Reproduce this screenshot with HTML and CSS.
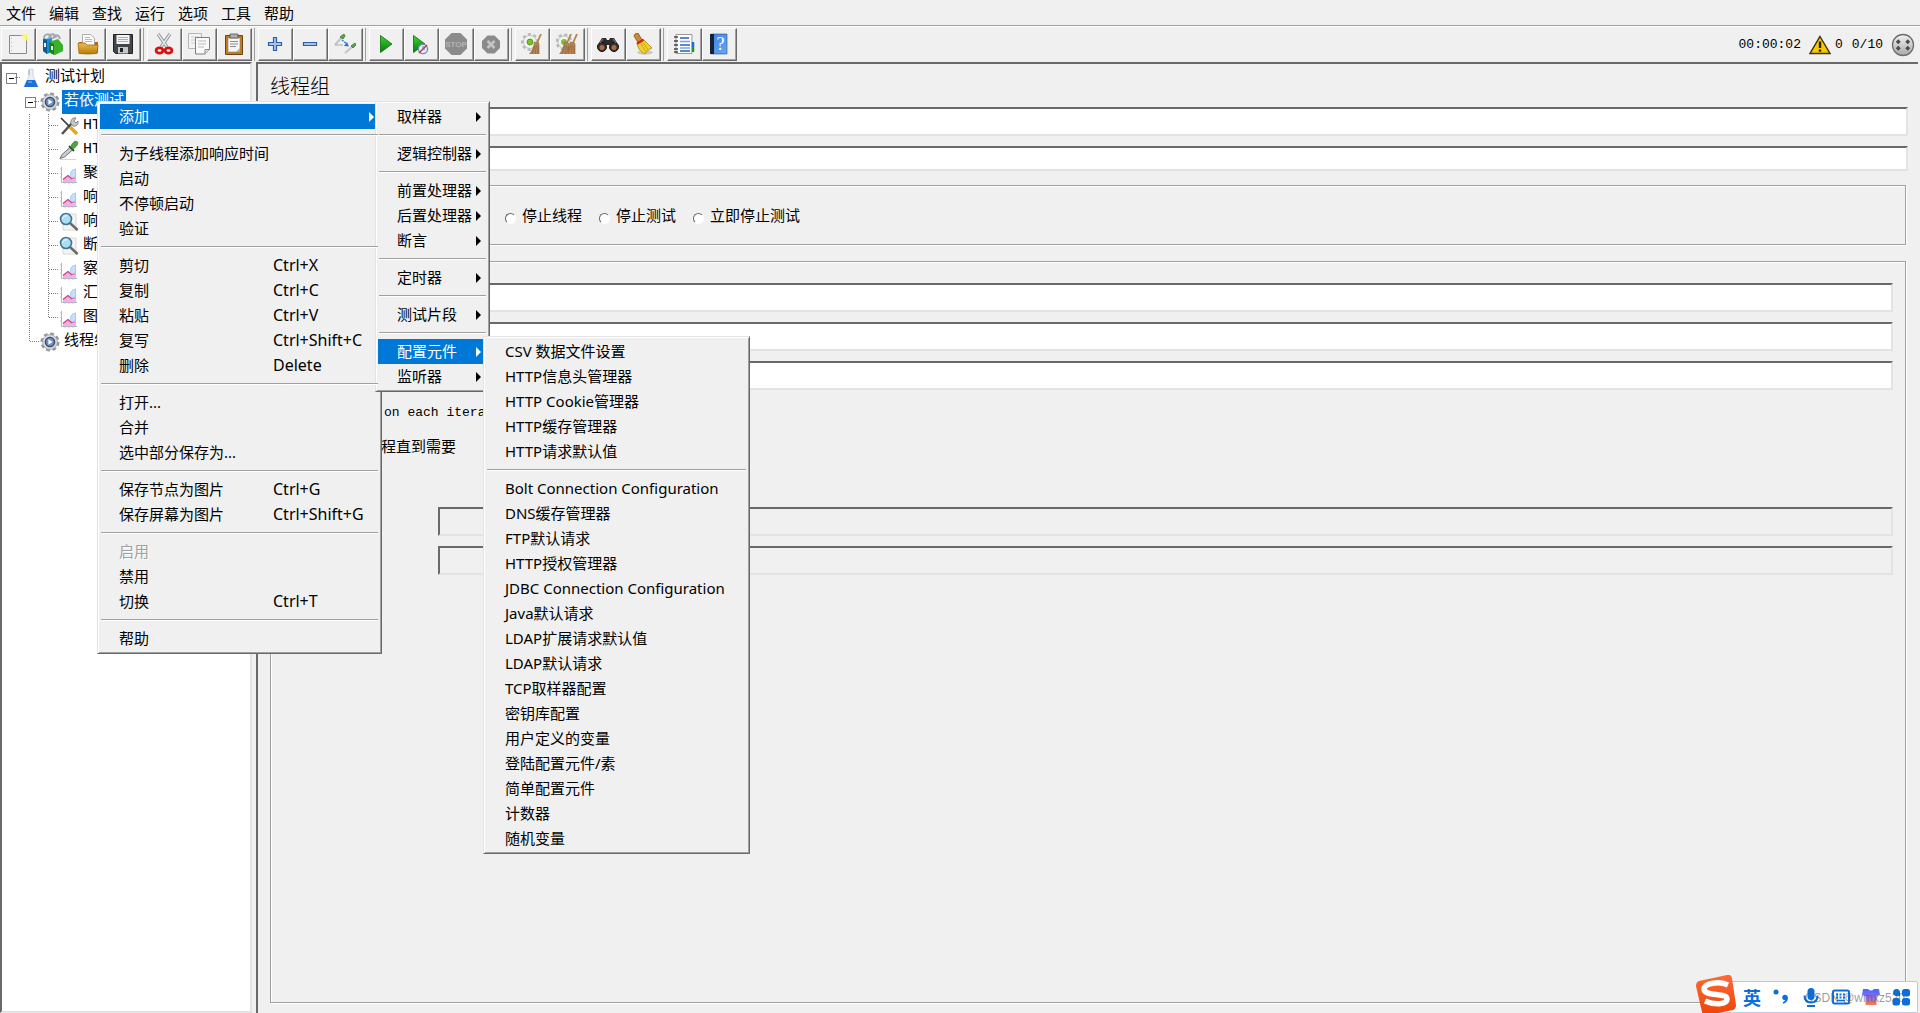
FILE: index.html
```html
<!DOCTYPE html>
<html lang="zh-CN">
<head>
<meta charset="utf-8">
<title>线程组</title>
<link rel="stylesheet" href="styles.css">
</head>
<body>
<svg class="defs" aria-hidden="true">
  <defs>
    <linearGradient id="play" x1="0" y1="0" x2="0" y2="1"><stop offset="0" stop-color="#3fd43a"/><stop offset="1" stop-color="#067a06"/></linearGradient>
    <linearGradient id="gold" x1="0" y1="0" x2="0" y2="1"><stop offset="0" stop-color="#f0bd4a"/><stop offset="1" stop-color="#b87a08"/></linearGradient>
    <linearGradient id="book" x1="0" y1="0" x2="1" y2="1"><stop offset="0" stop-color="#3b83e0"/><stop offset="1" stop-color="#6aa6f2"/></linearGradient>
    <linearGradient id="steel" x1="0" y1="0" x2="0" y2="1"><stop offset="0" stop-color="#f2f2f2"/><stop offset="1" stop-color="#a5a9ad"/></linearGradient>
    <linearGradient id="sogou" x1="0" y1="0" x2="0" y2="1"><stop offset="0" stop-color="#fb6a3a"/><stop offset="1" stop-color="#f04405"/></linearGradient>
    <linearGradient id="shirt" x1="0" y1="0" x2="0" y2="1"><stop offset="0" stop-color="#3f6cff"/><stop offset=".5" stop-color="#8a6cf0"/><stop offset="1" stop-color="#ff7a3c"/></linearGradient>
    <symbol id="gear" viewBox="0 0 20 20">
      <circle cx="10" cy="10" r="8" fill="none" stroke="#909498" stroke-width="3" stroke-dasharray="3.6 2.68"/>
      <circle cx="10" cy="10" r="7.4" fill="#d9dbdd" stroke="#9b9fa3" stroke-width=".8"/>
      <circle cx="10" cy="10" r="4.6" fill="#6f8fc4" stroke="#3a4a66" stroke-width="1.4"/>
      <path d="M8.4 7.3 12.6 10l-4.2 2.7z" fill="#fff"/>
    </symbol>
    <symbol id="chart" viewBox="0 0 20 20">
      <path d="M2.500 3v15.500H18" fill="none" stroke="#b4b4be"/>
      <path d="M1 5h2M1 9h2M1 13h2M6 18v2M10 18v2M14 18v2" stroke="#c4c4cc"/>
      <path d="M4 18v-2l5-4 4 3 4-1v4z" fill="#f5aee6"/>
      <path d="M4 15.500l5-4 3.500 3 4-1" fill="none" stroke="#cc3a78" stroke-width="1.200"/>
      <path d="M16.500 5c-6 1-6 7-3 9l3-1z" fill="#c6dffb" stroke="#94bff2" stroke-width=".8"/>
    </symbol>
    <symbol id="lens" viewBox="0 0 20 20">
      <path d="M4 2h13v16H4z" fill="#f4f4f4" stroke="#d8d8d8"/>
      <path d="M11 11l7 6.500" stroke="#6a6a6a" stroke-width="2.400" stroke-linecap="round"/>
      <circle cx="7" cy="7" r="5.500" fill="#a8def6" stroke="#4a7390" stroke-width="1.600"/>
      <path d="M4 6.500c.5-2 2-3 4-2.800" stroke="#fff" fill="none"/>
    </symbol>
    <symbol id="dropper" viewBox="0 0 20 20">
      <path d="M1 19.500h16" stroke="#d5d5d5"/>
      <path d="M1 18.500l2-4 8.500-7.500 2.500 2.500L5.500 17z" fill="#c9cdd0" stroke="#5f6468" stroke-width=".9"/>
      <path d="M10 6l5 5" stroke="#2e5a2c" stroke-width="2"/>
      <path d="M12 6.500c1-4 4-6 6-5s0 5-3.500 7z" fill="#4fa342" stroke="#2f7428" stroke-width=".7"/>
    </symbol>
    <symbol id="broom" viewBox="0 0 20 20">
      <path d="M16 0 12 9" stroke="#b5834c" stroke-width="1.800"/>
      <path d="M9.500 8l4.500 1.500v11H4C7.500 17 9 12 9.500 8z" fill="#b78855" stroke="#866038" stroke-width=".6"/>
      <path d="M10 11l-3 9M11.500 11l-1.500 9M13 12v8" stroke="#7d5630" stroke-width=".5"/>
    </symbol>
  </defs>
</svg>

<nav class="menubar" aria-label="主菜单">
  <button>文件</button><button>编辑</button><button>查找</button><button>运行</button><button>选项</button><button>工具</button><button>帮助</button>
</nav>

<div class="toolbar" role="toolbar">
  <div class="group">
    <button aria-label="新建"><svg viewBox="0 0 22 22"><path d="M2.500 2.500h17v18h-17z" fill="#f3f3f3" stroke="#8a8a8a"/><path d="M4.500 5v13" stroke="#b8b8b8" stroke-dasharray="1 3"/><circle cx="18" cy="4" r="4" fill="#fbf3a0" opacity=".7"/><circle cx="18" cy="4" r="2" fill="#fff86a"/></svg></button>
    <button aria-label="模板"><svg viewBox="0 0 22 22"><path d="M2 6c0-6 6-6 7-1M7 5c1-5 6-5 7 0M11 6c1-5 6-5 7 0" fill="none" stroke="#a3a9ae" stroke-width="2"/><path d="M1 6l9-1v14l-5 2-4-3z" fill="#1c8fd0"/><path d="M1 6l4 1v14l-4-3z" fill="#0d5c94"/><path d="M7 9l9-3 5 6v6l-8 4-6-3z" fill="#3bb02d"/><path d="M7 9l5 2v11l-5-3z" fill="#1f8014"/><path d="M2 10h2v4H2zM9 13h2v4H9z" fill="#e8f4ff"/></svg></button>
    <button aria-label="打开"><svg viewBox="0 0 22 22"><path d="M2 9h19v11H2z" fill="#a8710c"/><path d="M5.500 1.500h8l4 3.500v9h-12z" fill="#fafafa" stroke="#9a9a9a" stroke-width=".8"/><path d="M8 4.500h5M8 6.500h7M8 8.500h7" stroke="#b9b9b9"/><path d="M1 10h7l2 2h11l-1 8.500q-9 1-18 0z" fill="url(#gold)" stroke="#a06a06" stroke-width=".8"/></svg></button>
    <button aria-label="保存"><svg viewBox="0 0 22 22"><path d="M1.500 1.500h19v19h-17l-2-2z" fill="#42464b" stroke="#222"/><path d="M4.500 2h13v9h-13z" fill="#f4f6f8"/><path d="M6 4.500h10M6 6.500h10M6 8.500h10" stroke="#aac"/><path d="M6 14h10v6.500H6z" fill="#c6c9cc"/><path d="M8 15h3v4H8z" fill="#222"/></svg></button>
  </div>
  <div class="group">
    <button aria-label="剪切"><svg viewBox="0 0 22 22"><path d="M5 1l9 13M17 1 8 14" stroke="#8a8e92" stroke-width="3.200"/><path d="M5 1l9 13M17 1 8 14" stroke="#e3e5e7" stroke-width="1.600"/><ellipse cx="6.500" cy="17.500" rx="3.400" ry="2.700" fill="none" stroke="#d81010" stroke-width="2.800"/><ellipse cx="15.500" cy="17.500" rx="3.400" ry="2.700" fill="none" stroke="#d81010" stroke-width="2.800"/></svg></button>
    <button aria-label="复制"><svg viewBox="0 0 22 22"><path d="M.5.5h13v15H.5z" fill="#f4f4f4" stroke="#b5b5b5"/><path d="M3 4h8M3 7h8M3 10h8" stroke="#ccc"/><path d="M7.500 4.500h14v12l-4.500 4.500H7.500z" fill="#fafafa" stroke="#7d7d7d"/><path d="M17 21v-4.500h4.500" fill="#ddd" stroke="#8d8d8d"/><path d="M10 8h8M10 11h8M10 14h6" stroke="#b9b9b9"/></svg></button>
    <button aria-label="粘贴"><svg viewBox="0 0 22 22"><path d="M2.500 2.500h17v19h-17z" fill="#c07a1a" stroke="#70440a"/><path d="M5 5h12v14H5z" fill="#f6f6f6" stroke="#888" stroke-width=".6"/><path d="M7 1h8v4H7z" fill="#a9acb0" stroke="#555" stroke-width=".8"/><path d="M7 8.500h8M7 11h8M7 13.500h6" stroke="#8b8b8b"/><path d="M13 19l4-4v4z" fill="#aaa"/></svg></button>
  </div>
  <div class="group">
    <button aria-label="全部展开"><svg viewBox="0 0 22 22"><path d="M9.500 4.500h3v5h5v3h-5v5h-3v-5h-5v-3h5z" fill="#a9c3ea" stroke="#2f5fa8" stroke-width="1.200"/></svg></button>
    <button aria-label="全部折叠"><svg viewBox="0 0 22 22"><path d="M4.500 9.500h13v3h-13z" fill="#a9c3ea" stroke="#2f5fa8" stroke-width="1.200"/></svg></button>
    <button aria-label="切换"><svg viewBox="0 0 22 22"><path d="M1 12l7-8M11 20l7-6" stroke="#c3c7c3" stroke-width="2.200"/><path d="M6 4l4-3 1 2-2 3zM17 13l4-3 1 2-3 3z" fill="#5da04e" stroke="#4a8a3e"/><path d="M1 12h8" stroke="#aaa"/><path d="M8 7l5 4" stroke="#3c7be0" stroke-width="1.500" stroke-dasharray="2 1"/><path d="M15 13.500l-5-.5 3-4z" fill="#2f73e0"/></svg></button>
  </div>
  <div class="group">
    <button aria-label="启动"><svg viewBox="0 0 22 22"><path d="M5.500 2.500v17L17 11z" fill="url(#play)" stroke="#0a6a0a" stroke-width=".8"/></svg></button>
    <button aria-label="不停顿启动"><svg viewBox="0 0 22 22"><path d="M3.500 2.500v17L15 11z" fill="url(#play)" stroke="#0a6a0a" stroke-width=".8"/><circle cx="13" cy="16" r="4.600" fill="#e6eefa" stroke="#6a8cc4" stroke-width="1.300"/><path d="M9 20l8-8" stroke="#e02020" stroke-width="1.300"/><path d="M13 13v3h2" stroke="#5575aa" fill="none"/></svg></button>
    <button aria-label="停止" disabled><svg viewBox="0 0 22 22"><path d="M6.500 0h9L22 6.500v9L15.500 22h-9L0 15.500v-9z" fill="#8b8b8b"/><text x="11" y="14" class="stop">STOP</text></svg></button>
    <button aria-label="关闭" disabled><svg viewBox="0 0 22 22"><path d="M7.500 2.500h7l5.500 5.500v7l-5.500 5.500h-7L2 15V8z" fill="#8b8b8b"/><path d="M7.500 8l7 7M14.500 8l-7 7" stroke="#c4c4c4" stroke-width="2.600"/></svg></button>
  </div>
  <div class="group">
    <button aria-label="清除"><svg viewBox="0 0 22 22"><circle cx="9" cy="9" r="7.500" fill="none" stroke="#b9b9b9" stroke-width="3" stroke-dasharray="3 2.500"/><circle cx="9" cy="9" r="6.500" fill="#f4f4f4" stroke="#c0c0c0"/><circle cx="9" cy="9" r="3" fill="#7ac420" stroke="#5a9a16"/><use href="#broom" x="4" y="1" width="20" height="20"/></svg></button>
    <button aria-label="清除全部"><svg viewBox="0 0 22 22"><circle cx="8" cy="9" r="7" fill="none" stroke="#b9b9b9" stroke-width="3" stroke-dasharray="3 2.500"/><circle cx="8" cy="9" r="6" fill="#f4f4f4" stroke="#c0c0c0"/><circle cx="8" cy="9" r="3" fill="#7ac420"/><use href="#broom" x="-1" y="1" width="20" height="20"/><use href="#broom" x="5" y="1" width="20" height="20"/></svg></button>
  </div>
  <div class="group">
    <button aria-label="查找"><svg viewBox="0 0 22 22"><path d="M5 5h4l1 2h2l1-2h4l5 8-4 4-5-2v-3h-4v3l-5 2-4-4z" fill="#2b2b2b"/><circle cx="5" cy="14" r="4.500" fill="#333" stroke="#151515"/><circle cx="17" cy="14" r="4.500" fill="#333" stroke="#151515"/><circle cx="5" cy="14.500" r="2.500" fill="#b5683a"/><circle cx="17" cy="14.500" r="2.500" fill="#b5683a"/><path d="M6 6l-3 4M16 6l3 4" stroke="#888"/></svg></button>
    <button aria-label="重置查找"><svg viewBox="0 0 22 22"><ellipse cx="13" cy="19.500" rx="8" ry="2" fill="#c9c9c9"/><path d="M3 1l3-1 4 7-4 2.500L2 3z" fill="#c98a3a" stroke="#87540e" stroke-width=".8"/><path d="M5 10l6-4 9 9c-3 1-5 3-7 6-5-2-7-6-8-11z" fill="#f2d02c" stroke="#a8850c" stroke-width=".8"/><path d="M4.500 9.800l6-4 1.500 2-6.500 4z" fill="#d42222"/><path d="M9 11l5 8M11.500 10l4.500 7" stroke="#b5940f" stroke-width=".7"/></svg></button>
  </div>
  <div class="group last">
    <button aria-label="函数助手"><svg viewBox="0 0 22 22"><path d="M3 1.500h16v19H3z" fill="#fcfcfc" stroke="#999"/><path d="M20 9v5" stroke="#1a6ae0" stroke-width="2.500"/><path d="M20 14v5" stroke="#1f9a1f" stroke-width="2.500"/><path d="M1 4h4M1 8h4M1 12h4M1 16h4M1 19h4" stroke="#444" stroke-width="1.600"/><path d="M7 5h9M7 12h10M7 18h10" stroke="#2d5fb5" stroke-width="1.300"/><path d="M7 8.500h10M7 15h10" stroke="#7aa5e0" stroke-width="1.300"/></svg></button>
    <button aria-label="帮助"><svg viewBox="0 0 22 22"><path d="M3 1h16v20H3z" fill="url(#book)" stroke="#24508f" stroke-width=".6"/><path d="M2 1h4v20H2z" fill="#14223a"/><text x="12.500" y="17" class="q">?</text></svg></button>
  </div>
  <div class="status">
    <span>00:00:02</span>
    <svg class="warn" viewBox="0 0 22 20"><path d="M11 1.500 21 18.500H1z" fill="#f8c800" stroke="#3a3010" stroke-width="1.400"/><path d="M11 6.500v6.500" stroke="#2a2000" stroke-width="2.400"/><path d="M11 14.500v2.200" stroke="#2a2000" stroke-width="2.400"/></svg>
    <span class="errors">0</span>
    <span class="threads">0/10</span>
    <svg class="run" viewBox="0 0 24 24"><circle cx="12" cy="12" r="10.500" fill="url(#steel)" stroke="#6d6d6d" stroke-width="1.300"/><path d="M8.500 7.500 6 10M15.500 7.500 18 10M8.500 16.500 6 14M15.500 16.500 18 14" stroke="#4a4a4a" stroke-width="3.400"/></svg>
  </div>
</div>

<main class="split">
  <section class="tree">
    <ul>
      <li><i class="cell root open"></i><svg viewBox="0 0 20 20"><path d="M8 1h4v7l5 10.500H3L8 8z" fill="#eaf1f8" stroke="#c3cdd6" stroke-width=".8"/><path d="M6 12h8l3 7H3z" fill="#1c6fd6"/><path d="M7 14h4" stroke="#8cc0ff"/><path d="M8 2v5" stroke="#9aa7b3"/></svg><span>测试计划</span></li>
      <li class="l2"><i class="cell open"></i><svg viewBox="0 0 20 20"><use href="#gear"/></svg><span class="sel">若依测试</span></li>
      <li class="l3"><i class="cell v"></i><i class="cell v h"></i><svg viewBox="0 0 20 20"><path d="M3 18 13 7" stroke="#555" stroke-width="2.600"/><path d="M12 8c-1-4 2-7 5-6l-2 3 2 2 2-2c1 3-2 6-5 5z" fill="#c4c7ca" stroke="#666" stroke-width=".7"/><path d="M2 2l9 9" stroke="#333" stroke-width="1.600"/><path d="M11 11l7 7" stroke="#e6a817" stroke-width="3.600"/></svg><span>HTTP请求</span></li>
      <li class="l3"><i class="cell v"></i><i class="cell v h"></i><svg viewBox="0 0 20 20"><use href="#dropper"/></svg><span>HTTP信息头</span></li>
      <li class="l3"><i class="cell v"></i><i class="cell v h"></i><svg viewBox="0 0 20 20"><use href="#chart"/></svg><span>聚合报告</span></li>
      <li class="l3"><i class="cell v"></i><i class="cell v h"></i><svg viewBox="0 0 20 20"><use href="#chart"/></svg><span>响应时间图</span></li>
      <li class="l3"><i class="cell v"></i><i class="cell v h"></i><svg viewBox="0 0 20 20"><use href="#lens"/></svg><span>响应断言</span></li>
      <li class="l3"><i class="cell v"></i><i class="cell v h"></i><svg viewBox="0 0 20 20"><use href="#lens"/></svg><span>断言结果</span></li>
      <li class="l3"><i class="cell v"></i><i class="cell v h"></i><svg viewBox="0 0 20 20"><use href="#chart"/></svg><span>察看结果树</span></li>
      <li class="l3"><i class="cell v"></i><i class="cell v h"></i><svg viewBox="0 0 20 20"><use href="#chart"/></svg><span>汇总报告</span></li>
      <li class="l3"><i class="cell v"></i><i class="cell end h"></i><svg viewBox="0 0 20 20"><use href="#chart"/></svg><span>图形结果</span></li>
      <li class="l2"><i class="cell end h"></i><svg viewBox="0 0 20 20"><use href="#gear"/></svg><span>线程组</span></li>
    </ul>
  </section>

  <section class="panel">
    <h1>线程组</h1>
    <form>
      <input class="field name" type="text" aria-label="名称">
      <input class="field note" type="text" aria-label="注释">
      <fieldset class="action" aria-label="在取样器错误后要执行的动作">
        <label><input type="radio" name="action" checked>继续</label>
        <label><input type="radio" name="action">启动下一进程循环</label>
        <label><input type="radio" name="action">停止线程</label>
        <label><input type="radio" name="action">停止测试</label>
        <label><input type="radio" name="action">立即停止测试</label>
      </fieldset>
      <fieldset class="props" aria-label="线程属性">
        <input class="field" type="text" aria-label="线程数">
        <input class="field" type="text" aria-label="Ramp-Up时间">
        <input class="field" type="text" aria-label="循环次数">
        <label class="check"><input type="checkbox" checked>Same user on each iteration</label>
        <label class="check second"><input type="checkbox">延迟创建线程直到需要</label>
        <input class="field off first" type="text" aria-label="持续时间" disabled>
        <input class="field off" type="text" aria-label="启动延迟" disabled>
      </fieldset>
    </form>
  </section>
</main>

<ul class="menu context">
  <li class="has"><button class="on">添加</button>
    <ul class="menu add">
      <li class="has"><button>取样器</button></li>
      <li class="sep"></li>
      <li class="has"><button>逻辑控制器</button></li>
      <li class="sep"></li>
      <li class="has"><button>前置处理器</button></li>
      <li class="has"><button>后置处理器</button></li>
      <li class="has"><button>断言</button></li>
      <li class="sep"></li>
      <li class="has"><button>定时器</button></li>
      <li class="sep"></li>
      <li class="has"><button>测试片段</button></li>
      <li class="sep"></li>
      <li class="has"><button class="on">配置元件</button>
        <ul class="menu config">
          <li><button>CSV 数据文件设置</button></li>
          <li><button>HTTP信息头管理器</button></li>
          <li><button>HTTP Cookie管理器</button></li>
          <li><button>HTTP缓存管理器</button></li>
          <li><button>HTTP请求默认值</button></li>
          <li class="sep"></li>
          <li><button>Bolt Connection Configuration</button></li>
          <li><button>DNS缓存管理器</button></li>
          <li><button>FTP默认请求</button></li>
          <li><button>HTTP授权管理器</button></li>
          <li><button>JDBC Connection Configuration</button></li>
          <li><button>Java默认请求</button></li>
          <li><button>LDAP扩展请求默认值</button></li>
          <li><button>LDAP默认请求</button></li>
          <li><button>TCP取样器配置</button></li>
          <li><button>密钥库配置</button></li>
          <li><button>用户定义的变量</button></li>
          <li><button>登陆配置元件/素</button></li>
          <li><button>简单配置元件</button></li>
          <li><button>计数器</button></li>
          <li><button>随机变量</button></li>
        </ul>
      </li>
      <li class="has"><button>监听器</button></li>
    </ul>
  </li>
  <li class="sep"></li>
  <li><button>为子线程添加响应时间</button></li>
  <li><button>启动</button></li>
  <li><button>不停顿启动</button></li>
  <li><button>验证</button></li>
  <li class="sep"></li>
  <li><button>剪切<kbd>Ctrl+X</kbd></button></li>
  <li><button>复制<kbd>Ctrl+C</kbd></button></li>
  <li><button>粘贴<kbd>Ctrl+V</kbd></button></li>
  <li><button>复写<kbd>Ctrl+Shift+C</kbd></button></li>
  <li><button>删除<kbd>Delete</kbd></button></li>
  <li class="sep"></li>
  <li><button>打开...</button></li>
  <li><button>合并</button></li>
  <li><button>选中部分保存为...</button></li>
  <li class="sep"></li>
  <li><button>保存节点为图片<kbd>Ctrl+G</kbd></button></li>
  <li><button>保存屏幕为图片<kbd>Ctrl+Shift+G</kbd></button></li>
  <li class="sep"></li>
  <li><button disabled>启用</button></li>
  <li><button>禁用</button></li>
  <li><button>切换<kbd>Ctrl+T</kbd></button></li>
  <li class="sep"></li>
  <li><button>帮助</button></li>
</ul>

<div class="ime">
  <svg class="logo" viewBox="0 0 40 38"><path d="M3 6 31 0q4-1 5 3l4 27q0 4-3 5L12 40q-5 1-6-3L0 11q0-4 3-5z" fill="url(#sogou)"/><path d="M32 10C23 6 9 8 8 14c0 8 23 3 23 10 0 6-13 6-22 2" fill="none" stroke="#fff" stroke-width="5.500"/></svg>
  <b>英</b>
  <svg viewBox="0 0 20 20"><circle cx="5" cy="5" r="2.500" fill="#0a6fdc"/><circle cx="14" cy="10.500" r="2.700" fill="#0a6fdc"/><path d="M16 10.500q0 4-4 5.500" fill="none" stroke="#0a6fdc" stroke-width="1.800"/></svg>
  <svg viewBox="0 0 20 20"><rect x="6.500" y="1" width="7" height="12" rx="3.500" fill="#0a6fdc"/><path d="M3.500 8.500q0 7 6.500 7t6.500-7M6 19h8" fill="none" stroke="#0a6fdc" stroke-width="2"/></svg>
  <svg viewBox="0 0 20 20"><rect x="2" y="3.500" width="16" height="13" rx="1.500" fill="none" stroke="#0a6fdc" stroke-width="2"/><path d="M5 7.500h10M5 10.500h10" stroke="#0a6fdc" stroke-width="1.800" stroke-dasharray="2 1.500"/><path d="M6 13.500h8" stroke="#0a6fdc" stroke-width="1.500"/></svg>
  <svg viewBox="0 0 20 20"><path d="M2 2h5q3 3 6 0h5l1 6-3.500 1v9h-11V9L1 8z" fill="url(#shirt)"/></svg>
  <svg viewBox="0 0 20 20" fill="#0a6fdc"><path d="M9 9H5a3.500 3.500 0 1 1 4-4z"/><rect x="11" y="2" width="8" height="7.500" rx="2.500"/><rect x="1.500" y="11" width="7.500" height="7.500" rx="2.500"/><rect x="11" y="11" width="8" height="7.500" rx="2.500"/></svg>
  <span class="mark">CSDN @wmxz520</span>
</div>
</body>
</html>
```
FILE: styles.css
```css
:root {
  --face: #f0f0f0;
  --shade: #a0a0a0;
  --dark: #696969;
  --soft: #e3e3e3;
  --blue: #0078d7;
  --ui: "Noto Sans", "Noto Sans CJK SC", sans-serif;
  --mono: "Liberation Mono", "Noto Sans CJK SC", monospace;
}

* { box-sizing: border-box; }

body {
  margin: 0;
  height: 100vh;
  display: flex;
  flex-direction: column;
  overflow: hidden;
  background: var(--face);
  color: #000;
  font: 15px/24px var(--ui);
}

ul { margin: 0; padding: 0; list-style: none; }

button {
  margin: 0;
  padding: 0;
  border: 0;
  background: none;
  color: inherit;
  font: inherit;
}

.defs { position: absolute; width: 0; height: 0; }

.menubar {
  display: flex;
  gap: 13px;
  padding: 0 6px;
  height: 26px;
  border-bottom: 1px solid var(--shade);
}

/* toolbar */
.toolbar {
  display: flex;
  align-items: flex-start;
  height: 36px;
  padding: 1px 5px 0 1px;
  border-top: 1px solid #fff;
}

.group {
  display: flex;
  padding-right: 2px;
  margin-right: 3px;
  border-right: 1px solid var(--shade);
}

.group.last { border: 0; }

.group button {
  display: flex;
  align-items: center;
  justify-content: center;
  width: 35px;
  height: 33px;
  padding: 0 2px 1px 0;
  border: 1px solid;
  border-color: #fff var(--dark) var(--dark) #fff;
  box-shadow: inset -1px -1px var(--shade);
}

.group svg { width: 22px; height: 22px; }

.stop { font: bold 8px "Liberation Sans", sans-serif; text-anchor: middle; fill: #b4b4b4; }
.q { font: 18px "Liberation Serif", serif; text-anchor: middle; fill: #fff; }

.status {
  display: flex;
  align-items: center;
  height: 33px;
  margin-left: auto;
  font: 13px/20px var(--mono);
}

.warn { width: 22px; height: 20px; margin: 0 4px 0 8px; }
.threads { margin: 0 8px 0 9px; }
.run { width: 24px; height: 24px; }

/* main split */
.split {
  flex: 1;
  min-height: 0;
  display: grid;
  grid-template-columns: 252px 1fr;
  gap: 4px;
  padding-right: 2px;
}

.tree {
  border: 2px solid;
  border-color: var(--dark) var(--soft) var(--soft) var(--dark);
  padding-top: 2px;
  background: #fff;
  font-family: var(--mono);
}

.tree li { display: flex; height: 24px; white-space: nowrap; }
.tree svg { flex: none; width: 20px; height: 20px; margin: 2px 2px 0 0; }
.tree span { padding: 0 2px; }
.tree .sel { background: var(--blue); color: #fff; }
.l2, .l3 { padding-left: 19px; }

.cell { position: relative; flex: none; width: 19px; height: 24px; }

.v, .end {
  background: repeating-linear-gradient(#808080 0 1px, transparent 1px 2px) 8px 0 / 1px 24px no-repeat;
}

.end { background-size: 1px 12px; }

.h::after, .open::after {
  content: "";
  position: absolute;
  left: 9px;
  right: 0;
  top: 11px;
  height: 1px;
  background: repeating-linear-gradient(90deg, #808080 0 1px, transparent 1px 2px);
}

.open::after { left: 13px; }

.open::before {
  content: "";
  position: absolute;
  left: 4px;
  top: 7px;
  width: 9px;
  height: 9px;
  border: 1px solid #808080;
  background: linear-gradient(#000, #000) center / 5px 1px no-repeat;
}

/* right panel */
.panel {
  display: flex;
  flex-direction: column;
  padding: 0 10px 10px 12px;
  border-top: 2px solid var(--dark);
  border-left: 2px solid var(--dark);
  font-family: var(--mono);
}

h1 { margin: 0; font: 300 20px/43px "Noto Sans CJK SC", sans-serif; height: 43px; }

form { flex: 1; display: flex; flex-direction: column; }

.field {
  display: block;
  height: 29px;
  margin: 0 0 10px 70px;
  padding: 0 4px;
  border: 2px solid;
  border-color: var(--dark) var(--soft) var(--soft) var(--dark);
  background: #fff;
  font: inherit;
}

.note { height: 25px; margin-bottom: 14px; }

fieldset {
  margin: 0 2px 0 0;
  padding: 0;
  border: 1px solid var(--shade);
  box-shadow: inset 1px 1px #fff, 1px 1px #fff;
}

.action { display: flex; align-items: flex-start; gap: 17px; height: 60px; padding: 20px 0 0 16px; margin-bottom: 16px; }

.action label { display: flex; align-items: center; gap: 6px; }

input[type="radio"] {
  appearance: none;
  width: 11px;
  height: 11px;
  margin: 0;
  border: 1px solid;
  border-color: var(--dark) #fff #fff var(--dark);
  border-radius: 50%;
  background: #fff;
}

.props {
  flex: 1;
  display: flex;
  flex-direction: column;
  padding: 21px 12px 0 10px;
}

.props .field { margin-left: 80px; }
.check { display: flex; align-items: center; gap: 12px; margin-top: 1px; font-size: 13px; }
.check input { width: 13px; height: 13px; margin: 0; }
.second { margin: 12px 0 46px; font-size: 15px; }
.props .off { margin-left: 157px; background: var(--face); }

/* popup menus */
.menu {
  position: absolute;
  padding: 2px;
  border: 1px solid;
  border-color: var(--soft) var(--dark) var(--dark) var(--soft);
  box-shadow: inset 1px 1px #fff, inset -1px -1px var(--shade);
  background: var(--face);
}

.context { left: 97px; top: 101px; width: 285px; }
.add { left: 275px; top: -3px; width: 115px; color: #000; }
.config { left: 105px; top: -3px; width: 267px; }

.menu li { position: relative; }

.menu button {
  display: flex;
  width: 100%;
  height: 25px;
  padding-left: 19px;
  line-height: 25px;
  text-align: left;
  white-space: nowrap;
}

.menu .on { background: var(--blue); color: #fff; }
.menu button:disabled { color: #a0a0a0; text-shadow: 1px 1px #fff; }

.menu kbd { position: absolute; left: 173px; font: inherit; font-size: 16px; }

.has > button::after {
  content: "";
  align-self: center;
  margin: 0 6px 0 auto;
  border: solid transparent;
  border-width: 5px 0 5px 5px;
  border-left-color: currentColor;
}

/* the parent entry runs on beneath its submenu */
.context > .has > button::after { margin-right: 5px; }

.menu .sep {
  height: 2px;
  margin: 5px 1px;
  border-top: 1px solid var(--shade);
  background: #fff;
}

/* input method bar */
.ime {
  position: absolute;
  right: 2px;
  bottom: 0;
  display: flex;
  align-items: center;
  gap: 10px;
  height: 32px;
  padding-right: 6px;
  border: 1px solid #b9cbe0;
  border-radius: 2px;
  background: #fff;
  color: #0a6fdc;
}

.ime svg { width: 20px; height: 20px; }
.ime .logo { width: 40px; height: 38px; margin: -6px -3px 0 -12px; }
.ime b { font: 700 18px/30px "Noto Sans CJK SC", sans-serif; }

.mark {
  position: absolute;
  right: 12px;
  top: 6px;
  color: rgba(90, 90, 90, .6);
  font: 12px/20px "Liberation Sans", sans-serif;
}
```
